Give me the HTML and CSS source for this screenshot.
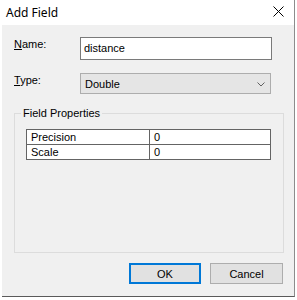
FILE: index.html
```html
<!DOCTYPE html>
<html>
<head>
    <title>Add Field</title>
    <link rel="stylesheet" href="styles.css">
</head>
<body>
    <div class="window">
        <div class="titlebar">
            <span class="title">Add Field</span>
            <svg class="close" width="11" height="11" viewBox="0 0 11 11">
                <path d="M0.5 0.5 L10.5 10.5 M10.5 0.5 L0.5 10.5" stroke="#000" stroke-width="1" fill="none"/>
            </svg>
        </div>
        <div class="content">
            <div class="row">
                <label class="label"><u>N</u>ame:</label>
                <div class="textbox">distance</div>
            </div>
            <div class="row row-type">
                <label class="label"><u>T</u>ype:</label>
                <div class="combo">
                    <span>Double</span>
                    <svg width="8" height="5" viewBox="0 0 8 5">
                        <path d="M0.5 0.5 L4 4 L7.5 0.5" stroke="#606060" stroke-width="1" fill="none"/>
                    </svg>
                </div>
            </div>
            <fieldset class="group">
                <legend>Field Properties</legend>
                <table class="props">
                    <tr>
                        <td class="name">Precision</td>
                        <td>0</td>
                    </tr>
                    <tr>
                        <td class="name">Scale</td>
                        <td>0</td>
                    </tr>
                </table>
            </fieldset>
            <div class="buttons">
                <button class="btn btn-default">OK</button>
                <button class="btn">Cancel</button>
            </div>
        </div>
    </div>
</body>
</html>
```

FILE: styles.css
```css
body {
    margin: 0;
    padding: 0;
    background-color: #ffffff;
    font-family: "Liberation Sans", Arial, sans-serif;
    font-size: 11px;
    color: #000;
}

.window {
    margin-left: 2px;
    width: 292px;
    height: 296px;
    background-color: #f0f0f0;
    border-right: 1px solid #8c8c8c;
    border-bottom: 1px solid #5a5a5a;
    display: flex;
    flex-direction: column;
}

.titlebar {
    height: 25px;
    background-color: #fff;
    display: flex;
    align-items: center;
    justify-content: space-between;
    padding: 0 10px 0 4px;
}

.title {
    font-family: "Noto Sans", sans-serif;
    font-size: 12px;
    margin-top: -1px;
}

.close {
    margin-top: -2px;
}

.content {
    padding: 12px 0 0 12px;
}

.row {
    display: flex;
    align-items: flex-start;
    height: 23px;
}

.row-type {
    margin-top: 13px;
    height: 21px;
}

.label {
    width: 66px;
    padding-top: 1px;
}

.textbox {
    height: 21px;
    line-height: 21px;
    background-color: #fff;
    border: 1px solid #7a7a7a;
    padding-left: 3px;
    box-sizing: content-box;
    width: 187px;
}

.combo {
    height: 19px;
    border: 1px solid #adadad;
    background-color: #e5e5e5;
    display: flex;
    align-items: center;
    justify-content: space-between;
    padding: 0 5px 0 4px;
    box-sizing: content-box;
    width: 180px;
}

.combo svg {
    margin-top: 1px;
}

.group {
    margin: 13px 0 0 0;
    padding: 9px 11px 0 11px;
    width: 246px;
    height: 135px;
    border: 1px solid #dcdcdc;
}

.group legend {
    padding: 0 2px;
    margin-left: -5px;
    line-height: 13px;
}

.props {
    border-collapse: collapse;
    width: 245px;
    background-color: #fff;
    border: 1px solid #646464;
}

.props td {
    border: 1px solid #646464;
    height: 14px;
    padding: 0 0 0 4px;
    line-height: 14px;
}

.props td.name {
    width: 118px;
}

.buttons {
    display: flex;
    justify-content: flex-end;
    gap: 9px;
    margin-top: 10px;
    padding-right: 11px;
}

.btn {
    font-family: "Liberation Sans", Arial, sans-serif;
    font-size: 11px;
    color: #000;
    width: 73px;
    height: 21px;
    background-color: #e1e1e1;
    border: 1px solid #adadad;
    padding: 0;
    margin: 0;
}

.btn-default {
    width: 72px;
    border: 2px solid #0078d7;
}
```
